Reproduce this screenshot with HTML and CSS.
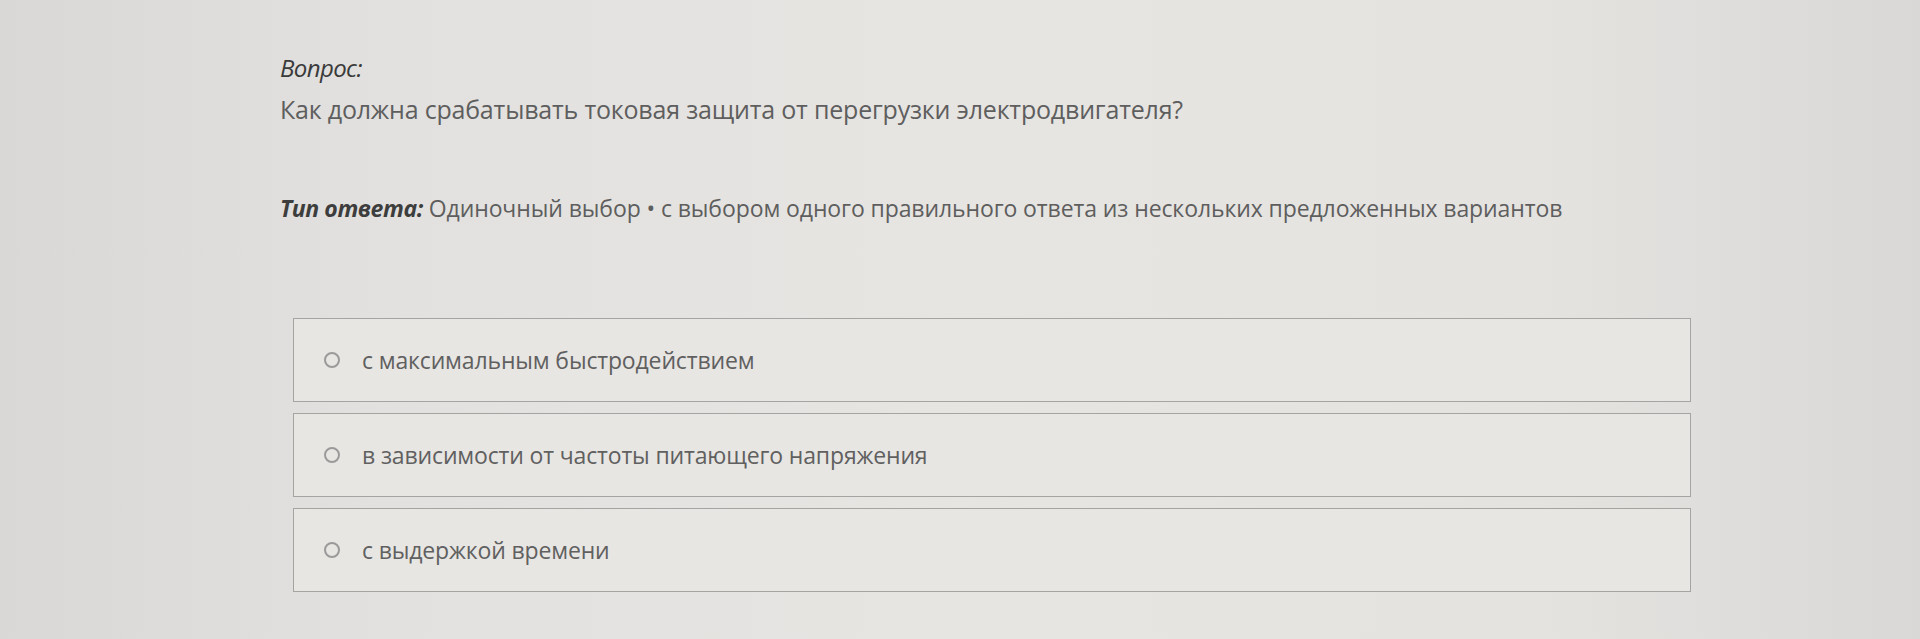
FILE: index.html
```html
<!DOCTYPE html>
<html lang="ru">
<head>
<meta charset="utf-8">
<title>Вопрос</title>
<link rel="stylesheet" href="styles.css">
</head>
<body>
<main class="page">
  <section class="question">
    <div class="q-label">Вопрос:</div>
    <div class="q-text">Как должна срабатывать токовая защита от перегрузки электродвигателя?</div>
  </section>
  <div class="answer-type"><span class="at-label">Тип ответа:</span> Одиночный выбор • с выбором одного правильного ответа из нескольких предложенных вариантов</div>
  <div class="options">
    <label class="option"><span class="radio"></span><span class="opt-text">с максимальным быстродействием</span></label>
    <label class="option"><span class="radio"></span><span class="opt-text">в зависимости от частоты питающего напряжения</span></label>
    <label class="option"><span class="radio"></span><span class="opt-text">с выдержкой времени</span></label>
  </div>
</main>
</body>
</html>
```
FILE: styles.css
```css
html, body {
  margin: 0;
  height: 100%;
}
body {
  background: linear-gradient(90deg, #d9d8d6 0%, #e2e1df 20%, #e7e5e2 50%, #e5e3e0 80%, #d9d8d6 100%);
  font-family: "Open Sans", "Noto Sans", sans-serif;
  color: #5e5e5e;
  overflow: hidden;
}
.page {
  padding: 53px 0 0 280px;
}
.q-label {
  font-style: italic;
  font-size: 24px;
  color: #3a3a3a;
  line-height: 30px;
  letter-spacing: -0.6px;
}
.q-text {
  margin-top: 8px;
  font-size: 25px;
  line-height: 36px;
  color: #5e5e5e;
  letter-spacing: -0.2px;
}
.answer-type {
  margin-top: 65px;
  font-size: 23px;
  line-height: 32px;
  color: #5e5e5e;
  letter-spacing: -0.1px;
}
.at-label {
  font-weight: 700;
  font-style: italic;
  color: #3d3d3d;
  letter-spacing: -0.4px;
}
.options {
  margin: 94px 0 0 13px;
  width: 1398px;
  display: flex;
  flex-direction: column;
  gap: 11px;
}
.option {
  display: flex;
  align-items: center;
  height: 84px;
  border: 1.5px solid #a4a4a3;
  background: #e8e6e3;
  padding-left: 30px;
  box-sizing: border-box;
}
.radio {
  width: 16px;
  height: 16px;
  border: 2px solid #9a9a9a;
  border-radius: 50%;
  box-sizing: border-box;
  margin-right: 22px;
  flex: none;
}
.opt-text {
  font-size: 23px;
  color: #606060;
  letter-spacing: -0.15px;
}
```
